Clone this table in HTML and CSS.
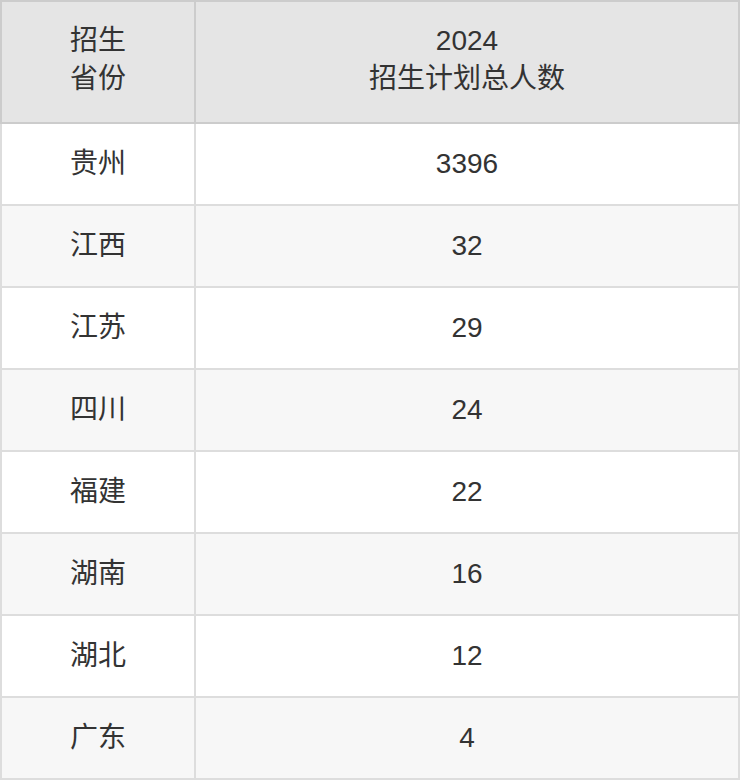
FILE: index.html
```html
<!DOCTYPE html>
<html lang="zh">
<head>
<meta charset="utf-8">
<link rel="stylesheet" href="styles.css">
</head>
<body>
<table class="plan">
  <thead>
    <tr>
      <th class="col-prov">招生<br>省份</th>
      <th class="col-num">2024<br>招生计划总人数</th>
    </tr>
  </thead>
  <tbody>
    <tr><td>贵州</td><td>3396</td></tr>
    <tr><td>江西</td><td>32</td></tr>
    <tr><td>江苏</td><td>29</td></tr>
    <tr><td>四川</td><td>24</td></tr>
    <tr><td>福建</td><td>22</td></tr>
    <tr><td>湖南</td><td>16</td></tr>
    <tr><td>湖北</td><td>12</td></tr>
    <tr><td>广东</td><td>4</td></tr>
  </tbody>
</table>
</body>
</html>
```
FILE: styles.css
```css
html, body {
  margin: 0;
  padding: 0;
  background: #fff;
}
.plan {
  width: 740px;
  border-collapse: collapse;
  table-layout: fixed;
  font-family: "Liberation Sans", "Noto Sans CJK SC", sans-serif;
  font-size: 28px;
  color: #333;
  line-height: 38px;
}
.plan th, .plan td {
  border: 2px solid #ddd;
  text-align: center;
  vertical-align: middle;
  padding: 0;
  font-weight: normal;
}
.plan th {
  background: #e5e5e5;
  border-color: #ccc;
  height: 116px;
  padding-bottom: 4px;
}
.plan td {
  height: 80px;
}
.plan .col-prov {
  width: 192px;
}
.plan tbody tr:nth-child(even) td {
  background: #f7f7f7;
}
```
